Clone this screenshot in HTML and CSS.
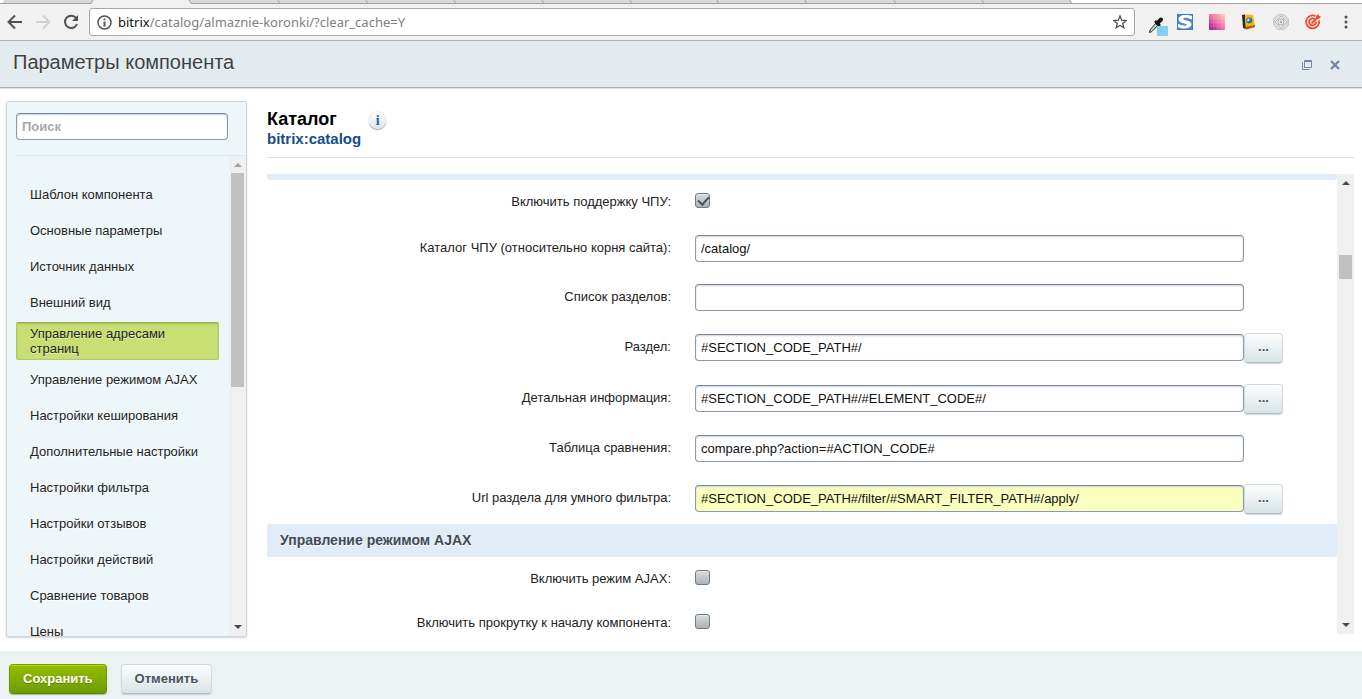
FILE: index.html
```html
<!DOCTYPE html>
<html lang="ru">
<head>
<meta charset="utf-8">
<title>Параметры компонента</title>
<link rel="stylesheet" href="styles.css">
</head>
<body>
<div class="browser">
  <svg class="tabs" width="1080" height="4" viewBox="0 0 1080 4" aria-hidden="true">
    <path d="M2 4L4 0H1070L1072 4z" fill="#d8d8d8"/>
    <path d="M91 4L93 0H189L191 4z" fill="#f1f1f1"/>
    <path d="M2 3.5H91L93 0M189 0L191 3.5H1080M278 0l2 4M366 0l2 4M454 0l2 4M542 0l2 4M630 0l2 4M717 0l2 4M805 0l2 4M894 0l2 4M982 0l2 4M1070 0l2 4" fill="none" stroke="#a3a3a3"/>
  </svg>
  <div class="toolbar">
    <button class="nav" aria-label="Назад"><svg width="16" height="16" viewBox="0 0 16 16"><path d="M15 8H2M8 1.500L1.500 8L8 14.500" fill="none" stroke="#505050" stroke-width="2"/></svg></button>
    <button class="nav" aria-label="Вперёд"><svg width="16" height="16" viewBox="0 0 16 16"><path d="M1 8H14M8 1.500L14.500 8L8 14.500" fill="none" stroke="#d0d0d0" stroke-width="2"/></svg></button>
    <button class="nav" aria-label="Обновить"><svg width="16" height="16" viewBox="0 0 16 16"><path d="M13.200 4.200A6.200 6.200 0 1 0 14 10" fill="none" stroke="#505050" stroke-width="2"/><path d="M15 1V7H9z" fill="#505050"/></svg></button>
    <div class="address">
      <svg width="15" height="15" viewBox="0 0 15 15"><circle cx="7.500" cy="7.500" r="6.500" fill="none" stroke="#555" stroke-width="1.500"/><path d="M7.500 6.500V11.500M7.500 3.500V5.300" stroke="#555" stroke-width="2"/></svg>
      <span class="url"><span class="host">bitrix</span>/catalog/almaznie-koronki/?clear_cache=Y</span>
      <svg width="14" height="14" viewBox="0 0 14 14"><path d="M7 1L8.700 5.200L13.200 5.500L9.700 8.400L10.900 12.800L7 10.400L3.100 12.800L4.300 8.400L.8 5.500L5.300 5.200z" fill="none" stroke="#505050" stroke-width="1.300"/></svg>
    </div>
    <div class="extensions">
      <svg width="22" height="22" viewBox="0 0 22 22"><path d="M2.500 18.500L3 16L9 9L11 11L5 17.500z" fill="#b8d4bd" stroke="#24402b"/><path d="M8 7L13 12" stroke="#111" stroke-width="2.500"/><path d="M10.500 9L14 5.500" stroke="#111" stroke-width="4" stroke-linecap="round"/><rect x="10" y="12" width="11" height="10" fill="#86ceee"/></svg>
      <svg width="16" height="16" viewBox="0 0 16 16"><rect width="16" height="16" fill="#3d7fb8"/><rect x="1" y="1" width="14" height="14" fill="#4a8cc2"/><path d="M15 2V5.500L11 4.200C7 3.200 5 4.600 7 5.700L12 7.300C17 9.500 14 14.500 8 14.500C5 14.500 3 14 1 13.200V10L5 11.200C9 12.400 11.500 11 9 10L4 8.400C-.5 6.300 1.500 1 8 1C11 1 13 1.400 15 2z" fill="#fff"/></svg>
      <svg width="16" height="16" viewBox="0 0 16 16"><defs><linearGradient id="sw" x1="0" y1="1" x2="1" y2="0"><stop offset="0" stop-color="#8e189c"/><stop offset=".5" stop-color="#f272a8"/><stop offset="1" stop-color="#ffd6b8"/></linearGradient></defs><rect width="16" height="16" rx="1" fill="url(#sw)"/><path d="M4.500 0V16M8.500 0V16M12.500 0V16M0 4.500H16M0 8.500H16M0 12.500H16" stroke="#fff" stroke-opacity=".07"/></svg>
      <svg width="16" height="16" viewBox="0 0 16 16"><path d="M1 1L4 .5L5 15L2 14z" fill="#332c22"/><path d="M4 .5L12 1L14 13L5 15.500z" fill="#f5b50a"/><path d="M5 13L14 11V13L5 15.500z" fill="#a35d05"/><circle cx="8.300" cy="6.500" r="3" fill="#2d6fae"/><path d="M6.500 7.500A2 2 0 0 1 8.500 4.500L8.300 6.700z" fill="#dcecf5"/></svg>
      <svg width="16" height="16" viewBox="0 0 16 16"><path d="M5 .7H11L15.300 5V11L11 15.300H5L.7 11V5z" fill="#dedede" stroke="#bdbdbd"/><path d="M8 2L14 8L8 14L2 8z" fill="#eee" stroke="#b5b5b5"/><circle cx="8" cy="8" r="3" fill="none" stroke="#aaa"/><circle cx="8" cy="8" r="1.200" fill="#aaa"/></svg>
      <svg width="16" height="16" viewBox="0 0 16 16"><g fill="none" stroke="#f04a2c" stroke-width="1.800"><path d="M10.500 2A6.500 6.500 0 1 0 14 6.500"/><path d="M9.500 5A3.500 3.500 0 1 0 11 7.500"/><path d="M7.500 8.500L13 3"/></g><path d="M11 4.500V2L13.500 0L13.800 2L16 2.500L14 5z" fill="#f04a2c"/><circle cx="7.500" cy="8.500" r="1.300" fill="#f04a2c"/></svg>
    </div>
    <button class="nav more" aria-label="Меню"><svg width="4" height="16" viewBox="0 0 4 16"><g fill="#505050"><circle cx="2" cy="3" r="1.500"/><circle cx="2" cy="8" r="1.500"/><circle cx="2" cy="13" r="1.500"/></g></svg></button>
  </div>
</div>

<header class="dialog-head">
  <h1>Параметры компонента</h1>
  <div class="window-tools">
    <button aria-label="Развернуть"><svg width="10" height="10" viewBox="0 0 10 10"><path d="M2.500 .5H9.500V7.500H2.500zM2 1.500H9M1 2.500H.5V9.500H7.500V9" fill="none" stroke="#7486a4"/></svg></button>
    <button aria-label="Закрыть"><svg width="10" height="10" viewBox="0 0 10 10"><path d="M1 1L9 9M9 1L1 9" stroke="#7486a4" stroke-width="2.200"/></svg></button>
  </div>
</header>

<main class="dialog-body">
  <aside class="sidebar">
    <div class="search"><input type="text" placeholder="Поиск" aria-label="Поиск"></div>
    <div class="menu-wrap">
      <nav class="menu">
        <a href="#">Шаблон компонента</a>
        <a href="#">Основные параметры</a>
        <a href="#">Источник данных</a>
        <a href="#">Внешний вид</a>
        <a href="#" class="active">Управление адресами страниц</a>
        <a href="#">Управление режимом AJAX</a>
        <a href="#">Настройки кеширования</a>
        <a href="#">Дополнительные настройки</a>
        <a href="#">Настройки фильтра</a>
        <a href="#">Настройки отзывов</a>
        <a href="#">Настройки действий</a>
        <a href="#">Сравнение товаров</a>
        <a href="#">Цены</a>
      </nav>
      <div class="scrollbar menu-scroll">
        <svg class="arrow dim" width="8" height="4" viewBox="0 0 8 4"><path d="M0 4L4 0L8 4z"/></svg>
        <div class="track"><div class="thumb"></div></div>
        <svg class="arrow" width="8" height="4" viewBox="0 0 8 4"><path d="M0 0H8L4 4z"/></svg>
      </div>
    </div>
  </aside>

  <section class="content">
    <div class="component">
      <div>
        <h2>Каталог</h2>
        <div class="code">bitrix:catalog</div>
      </div>
      <button class="info" aria-label="Справка">i</button>
    </div>
    <div class="form-wrap">
      <form class="form">
        <div class="band-end"></div>
        <div class="row check"><label for="sef">Включить поддержку ЧПУ:</label><input type="checkbox" id="sef" checked></div>
        <div class="row"><label for="folder">Каталог ЧПУ (относительно корня сайта):</label><div class="field"><input type="text" id="folder" value="/catalog/"></div></div>
        <div class="row"><label for="sections">Список разделов:</label><div class="field"><input type="text" id="sections"></div></div>
        <div class="row pick"><label for="section">Раздел:</label><div class="field"><input type="text" id="section" value="#SECTION_CODE_PATH#/"><button type="button" class="btn">...</button></div></div>
        <div class="row pick"><label for="element">Детальная информация:</label><div class="field"><input type="text" id="element" value="#SECTION_CODE_PATH#/#ELEMENT_CODE#/"><button type="button" class="btn">...</button></div></div>
        <div class="row"><label for="compare">Таблица сравнения:</label><div class="field"><input type="text" id="compare" value="compare.php?action=#ACTION_CODE#"></div></div>
        <div class="row pick"><label for="smart">Url раздела для умного фильтра:</label><div class="field"><input type="text" id="smart" class="focused" value="#SECTION_CODE_PATH#/filter/#SMART_FILTER_PATH#/apply/"><button type="button" class="btn">...</button></div></div>
        <h3 class="band">Управление режимом AJAX</h3>
        <div class="row check"><label for="ajax">Включить режим AJAX:</label><input type="checkbox" id="ajax"></div>
        <div class="row check"><label for="jump">Включить прокрутку к началу компонента:</label><input type="checkbox" id="jump"></div>
      </form>
      <div class="scrollbar form-scroll">
        <svg class="arrow" width="8" height="4" viewBox="0 0 8 4"><path d="M0 4L4 0L8 4z"/></svg>
        <div class="track"><div class="thumb"></div></div>
        <svg class="arrow" width="8" height="4" viewBox="0 0 8 4"><path d="M0 0H8L4 4z"/></svg>
      </div>
    </div>
  </section>
</main>

<footer class="dialog-foot">
  <button class="btn save">Сохранить</button>
  <button class="btn">Отменить</button>
</footer>
</body>
</html>
```
FILE: styles.css
```css
* { box-sizing: border-box; }

body {
  margin: 0;
  height: 100vh;
  display: flex;
  flex-direction: column;
  overflow: hidden;
  background: #fff;
  color: #222;
  font: 13px/15px "Liberation Sans", Arial, sans-serif;
}

button, input { font: inherit; color: inherit; }
button { border: 0; padding: 0; background: none; cursor: pointer; }
svg { display: block; flex: none; }

/* Browser chrome */
.browser {
  background: linear-gradient(#fff 3px, #a3a3a3 3px, #a3a3a3 4px, #f1f1f1 4px);
  border-bottom: 1px solid #b3b0b5;
}
.toolbar {
  height: 36px;
  display: flex;
  align-items: center;
  padding: 0 7px;
}
.nav { margin-right: 12px; }
.address {
  flex: 1;
  height: 28px;
  display: flex;
  align-items: center;
  gap: 6px;
  margin-left: -2px;
  padding: 0 7px;
  border: 1px solid #a8a8a8;
  border-radius: 3px;
  background: #fff;
}
.url {
  flex: 1;
  color: #808080;
  font: 13px/20px "Noto Sans", "Open Sans", sans-serif;
}
.host { color: #111; }
.extensions {
  display: flex;
  align-items: center;
  gap: 16px;
  margin-left: 12px;
}
.extensions svg:first-child { margin: 5px -8px 0 0; }
.more { margin: 0 7px 0 23px; }

/* Dialog title */
.dialog-head {
  height: 47px;
  display: flex;
  align-items: center;
  justify-content: space-between;
  padding: 0 22px 4px 13px;
  background: #e3ebee;
  border-bottom: 1px solid #a7acb0;
  box-shadow: 0 1px 1px #e3e6e8;
}
.dialog-head h1 {
  margin: 0;
  color: #3c3f42;
  font-size: 20px;
  line-height: 24px;
  font-weight: normal;
  text-shadow: 0 1px 0 #fff;
}
.window-tools { display: flex; gap: 18px; padding-top: 5px; }

.dialog-body {
  flex: 1;
  min-height: 0;
  display: flex;
  gap: 20px;
  padding: 13px 8px 14px 6px;
}

/* Sidebar */
.sidebar {
  flex: none;
  width: 241px;
  display: flex;
  flex-direction: column;
  border: 1px solid #ccd5da;
  border-radius: 2px;
  background: #eef6fa;
  box-shadow: 0 1px 2px #d4d8da;
}
.search {
  margin-left: 9px;
  padding: 11px 18px 15px 0;
  border-bottom: 1px solid #dde8ec;
}
input[type="text"] {
  width: 100%;
  height: 27px;
  padding: 0 5px;
  border: 1px solid #8c99a8;
  border-top-color: #778596;
  border-radius: 4px;
  background: #fff;
  color: #111;
  box-shadow: inset 0 1px 2px #ccd3d6;
  outline: 0;
}
.search input { display: block; font-weight: bold; }
.search input::placeholder { color: #a9a9a9; opacity: 1; }
.menu-wrap { flex: 1; min-height: 0; display: flex; }
.menu {
  flex: 1;
  overflow: hidden;
  padding: 20px 10px 0 9px;
}
.menu a {
  display: flex;
  align-items: center;
  height: 36px;
  padding: 0 14px;
  color: #222;
  text-decoration: none;
  text-shadow: 0 1px 0 #fff;
}
.menu .active {
  height: 38px;
  margin: 2px 0 1px;
  padding: 0 40px 0 13px;
  border: 1px solid #b1c966;
  border-top-color: #96ad4d;
  border-radius: 2px;
  background: #c9df74;
  box-shadow: inset 0 1px 2px #a6bd5c;
  text-shadow: 0 1px 0 #e4f0b2;
}

/* Scrollbars */
.scrollbar {
  flex: none;
  width: 17px;
  display: flex;
  flex-direction: column;
  align-items: center;
  padding: 7px 2px;
  background: #f0f0f0;
}
.track { flex: 1; width: 100%; margin: 6px 0; }
.thumb { background: #c1c1c1; }
.arrow { fill: #4a4a4a; }
.dim { fill: #a0a0a0; }
.menu-scroll .thumb { height: 48%; }
.form-scroll .track { padding-top: 64px; }
.form-scroll .thumb { height: 24px; }

/* Component heading */
.content {
  flex: 1;
  min-width: 0;
  display: flex;
  flex-direction: column;
}
.component {
  display: flex;
  align-items: flex-start;
  gap: 8px;
  height: 57px;
  padding-top: 8px;
  border-bottom: 1px solid #e0e2e4;
}
.component h2 {
  margin: 0;
  color: #000;
  font-size: 18px;
  line-height: 20px;
}
.code { color: #134f8a; font-size: 15px; line-height: 20px; font-weight: bold; }
.info {
  width: 17px;
  height: 17px;
  margin-top: 3px;
  border-radius: 50%;
  background: linear-gradient(#fff, #dfe5e8);
  box-shadow: 0 0 1px #8f989e, 0 1px 1px #a0a5a8;
  color: #1965b5;
  font: bold 14px/17px "Liberation Serif", "Times New Roman", serif;
}

/* Parameters form */
.form-wrap {
  flex: 1;
  min-height: 0;
  display: flex;
  margin: 16px 0 3px;
}
.form { flex: 1; min-width: 0; overflow: hidden; }
.band-end { height: 6px; background: #e0ecf8; border-radius: 0 0 3px 3px; }
.row {
  display: grid;
  grid-template-columns: 404fr 642fr;
  column-gap: 24px;
  align-items: center;
  height: 49px;
}
.row label { text-align: right; padding-bottom: 2px; }
.row.check { height: 44px; padding-bottom: 3px; }
.row.check label { padding: 2px 0 0; }
.row.pick { height: 51px; }
.field { display: flex; align-items: center; }
.field input[type="text"] { flex: 0 1 549px; min-width: 0; }
.field input.focused { background: #faffbd; }
.band {
  margin: 0;
  padding: 9px 13px;
  border-radius: 2px;
  background: #e0ecf8;
  color: #3f4b54;
  font-size: 14px;
  line-height: 15px;
  text-shadow: 0 1px 0 #fff;
}

input[type="checkbox"] {
  appearance: none;
  width: 15px;
  height: 15px;
  margin: 0;
  border: 1px solid #6f7a82;
  border-radius: 3px;
  background: linear-gradient(#d9dde0, #abb2b7);
  box-shadow: inset 0 1px 0 #e6e9eb;
}
input[type="checkbox"]:checked::after {
  content: "";
  display: block;
  width: 5px;
  height: 9px;
  margin: 0 0 0 4px;
  border: solid #49535b;
  border-width: 0 2px 2px 0;
  transform: rotate(42deg);
}

/* Buttons */
.btn {
  height: 30px;
  padding: 0 13px 2px;
  border: 1px solid #d3dadd;
  border-bottom-color: #b5bdc0;
  border-radius: 4px;
  background: linear-gradient(#fcfdfd, #d9e4e7);
  box-shadow: 0 1px 1px #ccd2d4;
  color: #49535c;
  font-weight: bold;
  text-shadow: 0 1px 0 #fff;
}
.field .btn { flex: none; width: 39px; }

.dialog-foot {
  height: 48px;
  display: flex;
  align-items: flex-start;
  gap: 14px;
  padding: 13px 9px;
  background: #ecf1f4;
}
.save {
  border-color: #7ba005 #6f9a00 #5f8500;
  background: linear-gradient(#94bd00, #6f9c00);
  box-shadow: 0 1px 1px #a9b3a0, inset 0 1px 0 #bdd900;
  color: #fff;
  text-shadow: 0 1px 0 #5c8000;
}
```
